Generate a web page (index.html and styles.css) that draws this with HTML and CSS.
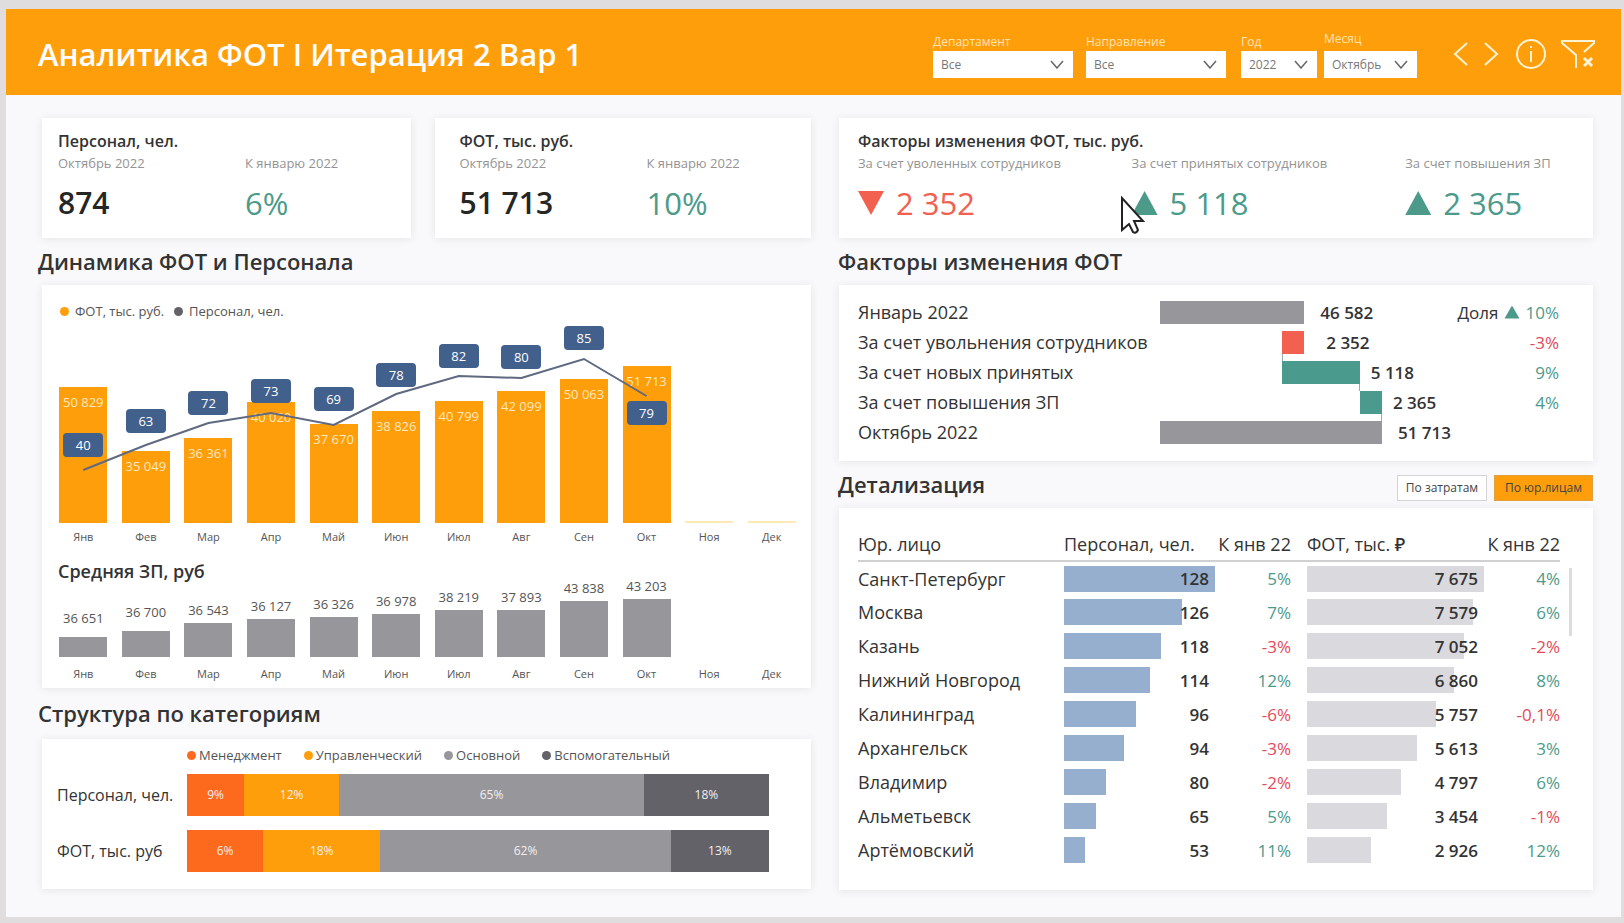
FILE: index.html
```html
<!DOCTYPE html>
<html lang="ru">
<head>
<meta charset="utf-8">
<title>Аналитика ФОТ</title>
<link rel="stylesheet" href="styles.css">
</head>
<body>
<div class="report">
  <header class="topbar">
    <h1 class="topbar-title">Аналитика ФОТ I Итерация 2 Вар 1</h1>
    <form class="filters">
      <div class="filter filter-wide"><label for="dep">Департамент</label><select id="dep"><option>Все</option></select></div>
      <div class="filter filter-wide"><label for="dir">Направление</label><select id="dir"><option>Все</option></select></div>
      <div class="filter filter-year"><label for="year">Год</label><select id="year"><option>2022</option></select></div>
      <div class="filter filter-month"><label for="month">Месяц</label><select id="month"><option>Октябрь</option></select></div>
    </form>
    <nav class="tools">
      <button class="tool" type="button" aria-label="Назад"><svg width="18" height="28" viewBox="0 0 18 28"><path d="M16 3 4 14l12 11"/></svg></button>
      <button class="tool" type="button" aria-label="Вперёд"><svg width="18" height="28" viewBox="0 0 18 28"><path d="M2 3l12 11L2 25"/></svg></button>
      <button class="tool" type="button" aria-label="Информация"><svg width="32" height="32" viewBox="0 0 32 32"><circle cx="16" cy="16" r="14"/><path d="M16 13v11"/><path d="M16 8v2"/></svg></button>
      <button class="tool" type="button" aria-label="Сбросить фильтры"><svg width="34" height="32" viewBox="1 0 34 32"><path d="M16 30V17L2 5V3h32v2l-10 9"/><path class="thick" d="m24 20 8 8m0-8-8 8"/></svg></button>
    </nav>
  </header>

  <main class="board">
    <div class="column">
      <div class="kpi-pair">
        <section class="card kpi">
          <h3 class="card-title">Персонал, чел.</h3>
          <dl class="kpi-grid kpi-two">
            <div><dt>Октябрь 2022</dt><dd class="amount">874</dd></div>
            <div><dt>К январю 2022</dt><dd class="up">6%</dd></div>
          </dl>
        </section>
        <section class="card kpi kpi-inset">
          <h3 class="card-title">ФОТ, тыс. руб.</h3>
          <dl class="kpi-grid kpi-two">
            <div><dt>Октябрь 2022</dt><dd class="amount">51 713</dd></div>
            <div><dt>К январю 2022</dt><dd class="up">10%</dd></div>
          </dl>
        </section>
      </div>

      <h2 class="section-title">Динамика ФОТ и Персонала</h2>
      <section class="card dynamics">
        <ul class="legend">
          <li><i class="dot dot-amber"></i>ФОТ, тыс. руб.</li>
          <li><i class="dot dot-slate"></i>Персонал, чел.</li>
        </ul>
        <div class="plot plot-main" id="plot-main"></div>
        <h3 class="card-title">Средняя ЗП, руб</h3>
        <div class="plot plot-salary" id="plot-salary"></div>
      </section>

      <h2 class="section-title section-title-tall">Структура по категориям</h2>
      <section class="card structure">
        <ul class="legend legend-wide">
          <li><i class="dot dot-orange"></i>Менеджмент</li>
          <li><i class="dot dot-amber"></i>Управленческий</li>
          <li><i class="dot dot-grey"></i>Основной</li>
          <li><i class="dot dot-slate"></i>Вспомогательный</li>
        </ul>
        <div class="stack-row">
          <span class="stack-name">Персонал, чел.</span>
          <div class="stack">
            <span class="bg-orange" style="flex-grow:57">9%</span><span class="bg-amber" style="flex-grow:95">12%</span><span class="bg-grey" style="flex-grow:304">65%</span><span class="bg-slate" style="flex-grow:125">18%</span>
          </div>
        </div>
        <div class="stack-row">
          <span class="stack-name">ФОТ, тыс. руб</span>
          <div class="stack">
            <span class="bg-orange" style="flex-grow:76">6%</span><span class="bg-amber" style="flex-grow:117">18%</span><span class="bg-grey" style="flex-grow:290">62%</span><span class="bg-slate" style="flex-grow:98">13%</span>
          </div>
        </div>
      </section>
    </div>

    <div class="column column-right">
      <section class="card kpi">
        <h3 class="card-title">Факторы изменения ФОТ, тыс. руб.</h3>
        <dl class="kpi-grid kpi-three">
          <div><dt>За счет уволенных сотрудников</dt><dd class="down"><i class="tri tri-down"></i>2 352</dd></div>
          <div class="pointed"><dt>За счет принятых сотрудников</dt><dd class="up"><i class="tri tri-up"></i>5 118</dd>
            <svg class="pointer" width="26" height="40" viewBox="0 0 26 40"><path d="M2 2v32l7-6 4 8q3 2 5-2l-4-9h9z"/></svg></div>
          <div><dt>За счет повышения ЗП</dt><dd class="up"><i class="tri tri-up"></i>2 365</dd></div>
        </dl>
      </section>

      <h2 class="section-title">Факторы изменения ФОТ</h2>
      <section class="card factors">
        <div class="factor"><span class="factor-name">Январь 2022</span><div class="track"><i class="bar bg-grey" style="width:65%"></i><b class="total">46 582</b></div><span class="share up"><em>Доля</em><i class="tri tri-up tri-small"></i>10%</span></div>
        <div class="factor"><span class="factor-name">За счет увольнения сотрудников</span><div class="track"><i class="bar bg-red link-left" style="margin-left:55%;width:10%"></i><b class="loss">2 352</b></div><span class="share neg">-3%</span></div>
        <div class="factor"><span class="factor-name">За счет новых принятых</span><div class="track"><i class="bar bg-green link-right" style="margin-left:55%;width:35%"></i><b>5 118</b></div><span class="share up">9%</span></div>
        <div class="factor"><span class="factor-name">За счет повышения ЗП</span><div class="track"><i class="bar bg-green link-right" style="margin-left:90%;width:10%"></i><b>2 365</b></div><span class="share up">4%</span></div>
        <div class="factor"><span class="factor-name">Октябрь 2022</span><div class="track"><i class="bar bg-grey" style="width:100%"></i><b class="total">51 713</b></div><span class="share"></span></div>
      </section>

      <div class="section-head">
        <h2 class="section-title">Детализация</h2>
        <div class="switch">
          <button type="button" class="switch-item switch-cost">По затратам</button>
          <button type="button" class="switch-item switch-on">По юр.лицам</button>
        </div>
      </div>
      <section class="card detail">
        <table class="detail-table">
          <colgroup><col class="c-name"><col class="c-staff"><col class="c-diff"><col class="c-pay"><col class="c-diff"></colgroup>
          <thead><tr><th>Юр. лицо</th><th>Персонал, чел.</th><th class="right">К янв 22</th><th class="gap">ФОТ, тыс. ₽</th><th class="right">К янв 22</th></tr></thead>
          <tbody id="rows"></tbody>
        </table>
        <div class="scroll"><i class="scroll-thumb"></i></div>
      </section>
    </div>
  </main>
</div>
<script src="charts.js"></script>
</body>
</html>
```

FILE: styles.css
```css
* { box-sizing: border-box; }
body {
  margin: 0;
  min-height: 100vh;
  padding: 9px 3px 6px 6px;
  background: #dfdddd;
  color: #333;
  font-family: "Open Sans", "Noto Sans", sans-serif;
  font-size: 16px;
}
h1, h2, h3, dl, dd, ul { margin: 0; padding: 0; }
ul { list-style: none; }
i, em { font-style: normal; }
button { font: inherit; cursor: pointer; }

.report { background: #f9f9fb; min-height: calc(100vh - 15px); }

.topbar {
  display: flex;
  align-items: center;
  height: 86px;
  padding: 4px 24px 0 32px;
  background: #ff9e0b;
  color: #fff;
}
.topbar-title { flex: 1; font-size: 31px; font-weight: 600; line-height: 40px; }
.filters { display: flex; align-items: flex-end; gap: 13px; padding-bottom: 4px; }
.filter { display: flex; flex-direction: column; }
.filter label { font-size: 12px; line-height: 18px; color: #ffe3b0; }
.filter select {
  width: 100%;
  height: 27px;
  padding: 0 8px;
  border: 0;
  border-radius: 0;
  appearance: none;
  background: #fff url("data:image/svg+xml,%3Csvg xmlns='http://www.w3.org/2000/svg' width='14' height='9'%3E%3Cpath d='M1 1l6 7 6-7' fill='none' stroke='%23666' stroke-width='1.5'/%3E%3C/svg%3E") no-repeat right 9px center;
  color: #777;
  font: 12px "Open Sans", sans-serif;
}
.filter-wide { width: 140px; }
.filter-year { width: 76px; margin-left: 2px; }
.filter-month { width: 93px; margin-left: -6px; }
.filter-month label { line-height: 24px; }
.tools { display: flex; align-items: center; gap: 10px; margin-left: 32px; }
.tool { display: flex; padding: 2px; border: 0; background: none; }
.tool svg { fill: none; stroke: #fff3d6; stroke-width: 2; }
.tool .thick { stroke-width: 3; }

.board {
  display: grid;
  grid-template-columns: 768fr 753fr;
  gap: 28px;
  padding: 23px 28px 24px 36px;
}
.column { display: flex; flex-direction: column; min-width: 0; }
.card { background: #fff; box-shadow: 0 1px 8px rgba(60, 60, 80, .1); }
.card-title { font-size: 16px; font-weight: 600; line-height: 22px; }
.section-title { font-size: 22px; font-weight: 600; line-height: 47px; margin-left: -4px; }
.section-title-tall { line-height: 51px; }
.column-right .section-title { margin-left: -1px; }
.section-head { display: flex; align-items: center; justify-content: space-between; }

.kpi-pair { display: grid; grid-template-columns: 369fr 375fr; gap: 24px; }
.kpi { height: 120px; padding: 12px 0 0 16px; }
.kpi-inset { padding-left: 24px; }
.column > .kpi { padding-left: 19px; }
.kpi-grid { display: grid; }
.kpi-two { grid-template-columns: 187px 1fr; }
.kpi-three { grid-template-columns: 274fr 274fr 188fr; }
.kpi dt { font-size: 13px; line-height: 22px; color: #949494; white-space: nowrap; }
.kpi dd { display: flex; align-items: center; font-size: 31px; line-height: 40px; padding-top: 9px; }
.kpi dd.amount { font-size: 30px; font-weight: 600; color: #262626; }
.kpi dd.down { color: #f2604f; }
.kpi dd.up, .up { color: #4b9a8a; }
.neg { color: #e5495a; }
.tri { display: inline-block; width: 26px; height: 24px; margin-right: 12px; background: currentColor; }
.tri-up { clip-path: polygon(50% 0, 100% 100%, 0 100%); }
.tri-down { clip-path: polygon(0 0, 100% 0, 50% 100%); }
.tri-small { width: 15px; height: 13px; margin: 0 6px; }
.pointed { position: relative; }
.pointer { position: absolute; left: -12px; top: 44px; fill: #fff; stroke: #222; stroke-width: 2; }

.legend { display: flex; gap: 10px; font-size: 13px; line-height: 18px; color: #555; }
.legend li { display: flex; align-items: center; white-space: nowrap; }
.dot { width: 9px; height: 9px; margin-right: 6px; border-radius: 50%; }
.dot-amber, .bg-amber { background: #ff9e0b; }
.dot-slate, .bg-slate { background: #626268; }
.dot-orange, .bg-orange { background: #fd6a1e; }
.dot-grey, .bg-grey { background: #97969b; }
.bg-red { background: #f2604f; }
.bg-green { background: #4b9a8e; }

.dynamics { height: 403px; padding: 17px 8px 0 10px; }
.dynamics .legend { padding-left: 8px; }
.dynamics .card-title { padding-left: 6px; margin-top: 15px; font-size: 18px; }
.plot { position: relative; display: grid; grid-template-columns: repeat(12, 1fr); }
.month { display: flex; flex-direction: column; align-items: center; justify-content: flex-end; position: relative; }
.month-bar { width: 48px; background: #ff9e0b; color: #ffe9bd; font-size: 13px; line-height: 18px; padding-top: 6px; text-align: center; white-space: nowrap; }
.month-bar.empty { height: 2px; padding: 0; background: #ffe9b5; }
.month-name { font-size: 11px; line-height: 16px; margin-top: 6px; color: #555; }
.plot-main { height: 225px; }
.trend { position: absolute; left: 0; top: 0; width: 100%; height: 203px; fill: none; stroke: #5f6980; stroke-width: 2; }
.badge { position: absolute; z-index: 1; width: 40px; border-radius: 4px; background: #41608c; color: #fff; font-size: 13px; line-height: 24px; text-align: center; }
.plot-salary { height: 105px; margin-top: -5px; }
.plot-salary .month-bar { background: #97969b; padding: 0; }
.plot-salary .month-name { margin-top: 9px; }
.month-value { font-size: 13px; line-height: 18px; margin-bottom: 4px; color: #555; }
.month-value.raised { margin-bottom: 10px; }

.structure { height: 150px; padding: 7px 42px 0 15px; }
.legend-wide { gap: 22px; padding: 0 0 10px 130px; }
.legend-wide .dot { margin-right: 3px; }
.stack-row { display: flex; align-items: center; margin-bottom: 14px; }
.stack-name { width: 130px; white-space: nowrap; }
.stack { display: flex; flex: 1; height: 42px; }
.stack span { flex-basis: 0; color: #f3eeee; font-size: 12px; line-height: 42px; text-align: center; }

.factors { height: 176px; padding: 12px 34px 0 19px; font-size: 18px; }
.factor { display: grid; grid-template-columns: 302fr 222fr 177fr; align-items: center; height: 30px; }
.factor-name { white-space: nowrap; }
.track { display: flex; align-items: center; white-space: nowrap; }
.bar { position: relative; flex: none; height: 23px; }
.bar::after { position: absolute; top: 23px; height: 7px; border-left: 1px solid #9ab; }
.link-left::after { content: ""; left: 0; }
.link-right::after { content: ""; right: 0; }
.track b { font-size: 17px; font-weight: 600; margin-left: 11px; }
.track .total { margin-left: 16px; }
.track .loss { margin-left: 22px; }
.share { display: flex; align-items: center; justify-content: flex-end; font-size: 17px; }
.share em { color: #333; }

.switch { display: flex; gap: 7px; padding-top: 6px; }
.switch-item { height: 26px; padding: 0; border: 1px solid #d5d5d5; background: #fff; color: #444; font-size: 12px; }
.switch-cost { width: 90px; }
.switch-on { width: 99px; border-color: #e0a040; background: #ff9e0b; }

.detail { display: flex; align-items: flex-start; gap: 9px; height: 382px; padding: 18px 21px 0 19px; }
.detail-table { flex: 1; table-layout: fixed; border-collapse: collapse; font-size: 18px; }
.c-name { width: 206px; }
.c-staff { width: 151px; }
.c-diff { width: 76px; }
.c-pay { width: 193px; }
.detail-table th { height: 35px; padding: 2px 0 0; font-weight: 500; text-align: left; white-space: nowrap; border-bottom: 2px solid #d0cfd2; }
.detail-table td { height: 34px; padding: 0; white-space: nowrap; }
.detail-table .gap { padding-left: 16px; }
.detail-table .right { text-align: right; }
.detail-table td.right { font-size: 17px; }
.cell { display: grid; align-items: center; }
.cell > * { grid-area: 1 / 1; }
.cell-bar { height: 26px; }
.staff .cell-bar { background: #97afcf; }
.pay .cell-bar { background: #dad9dd; }
.cell b { font-size: 17px; font-weight: 600; text-align: right; padding-right: 6px; }
.scroll { padding-top: 42px; }
.scroll-thumb { display: block; width: 3px; height: 68px; background: #dcdcdf; }
```

FILE: charts.js
```js
const months = ["Янв", "Фев", "Мар", "Апр", "Май", "Июн", "Июл", "Авг", "Сен", "Окт", "Ноя", "Дек"];
// value, bar height, headcount, line height, badge height
const payroll = [
  ["50 829", 136, 40, 53, 66], ["35 049", 72, 63, 78, 90], ["36 361", 85, 72, 100, 108],
  ["40 020", 121, 73, 110, 120], ["37 670", 99, 69, 98, 112], ["38 826", 112, 78, 129, 136],
  ["40 799", 122, 82, 147, 155], ["42 099", 132, 80, 145, 154], ["50 063", 144, 85, 164, 173],
  ["51 713", 157, 79, 127, 98]
];
const salary = [
  ["36 651", 20, 1], ["36 700", 26, 1], ["36 543", 34, 0], ["36 127", 38, 0], ["36 326", 40, 0],
  ["36 978", 43, 0], ["38 219", 47, 0], ["37 893", 47, 0], ["43 838", 56, 0], ["43 203", 58, 0]
];
const entities = [
  ["Санкт-Петербург", 128, 100, "5%", "7 675", 100, "4%"],
  ["Москва", 126, 78, "7%", "7 579", 94, "6%"],
  ["Казань", 118, 64, "-3%", "7 052", 89, "-2%"],
  ["Нижний Новгород", 114, 57, "12%", "6 860", 83, "8%"],
  ["Калининград", 96, 48, "-6%", "5 757", 73, "-0,1%"],
  ["Архангельск", 94, 40, "-3%", "5 613", 62, "3%"],
  ["Владимир", 80, 28, "-2%", "4 797", 53, "6%"],
  ["Альметьевск", 65, 21, "5%", "3 454", 45, "-1%"],
  ["Артёмовский", 53, 14, "11%", "2 926", 36, "12%"]
];

const points = payroll.map((p, i) => `${i * 100 + 50},${203 - p[3]}`).join(" ");
document.getElementById("plot-main").innerHTML = months.map((m, i) => {
  const p = payroll[i];
  const bar = p
    ? `<span class="badge" style="bottom:${p[4] + 22}px">${p[2]}</span><div class="month-bar" style="height:${p[1]}px">${p[0]}</div>`
    : `<div class="month-bar empty"></div>`;
  return `<div class="month">${bar}<span class="month-name">${m}</span></div>`;
}).join("") + `<svg class="trend" viewBox="0 0 1200 203" preserveAspectRatio="none"><polyline vector-effect="non-scaling-stroke" points="${points}"/></svg>`;

document.getElementById("plot-salary").innerHTML = months.map((m, i) => {
  const s = salary[i];
  const bar = s ? `<span class="month-value${s[2] ? " raised" : ""}">${s[0]}</span><div class="month-bar" style="height:${s[1]}px"></div>` : "";
  return `<div class="month">${bar}<span class="month-name">${m}</span></div>`;
}).join("");

const tone = v => v.startsWith("-") ? "neg" : "up";
document.getElementById("rows").innerHTML = entities.map(r => `<tr>
  <td>${r[0]}</td>
  <td class="staff"><div class="cell"><i class="cell-bar" style="width:${r[2]}%"></i><b>${r[1]}</b></div></td>
  <td class="right ${tone(r[3])}">${r[3]}</td>
  <td class="pay gap"><div class="cell"><i class="cell-bar" style="width:${r[5]}%"></i><b>${r[4]}</b></div></td>
  <td class="right ${tone(r[6])}">${r[6]}</td></tr>`).join("");
```
